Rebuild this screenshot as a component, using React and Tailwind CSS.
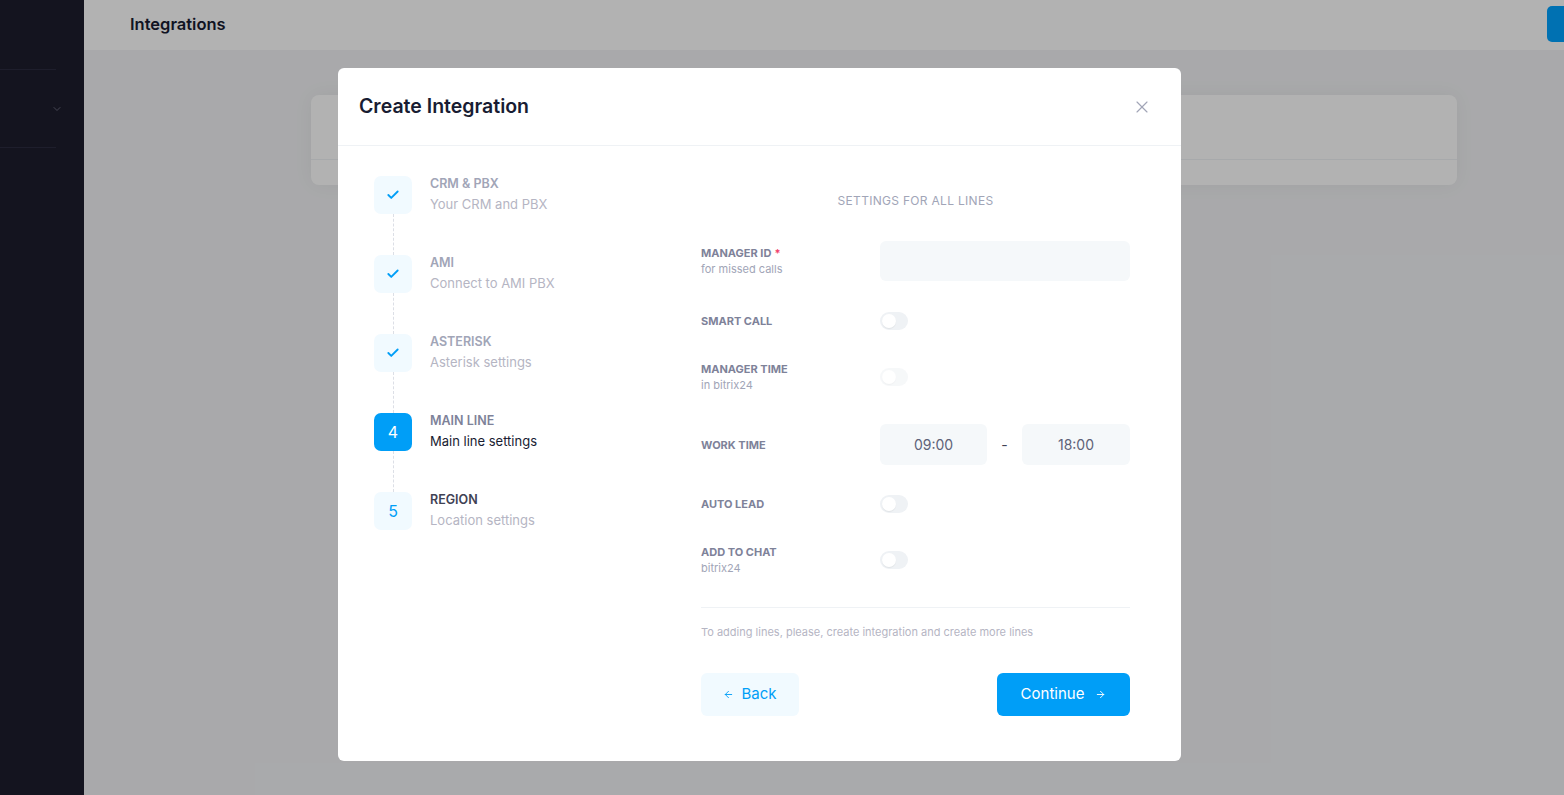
import { Check, X, ArrowLeft, ArrowRight, ChevronDown } from "lucide-react";

const steps = [
  { title: "CRM & PBX", desc: "Your CRM and PBX", state: "done" },
  { title: "AMI", desc: "Connect to AMI PBX", state: "done" },
  { title: "ASTERISK", desc: "Asterisk settings", state: "done" },
  { title: "MAIN LINE", desc: "Main line settings", state: "active", num: 4 },
  { title: "REGION", desc: "Location settings", state: "todo", num: 5 },
];

const Toggle = ({ disabled }) => (
  <div
    className={`w-[28px] h-[18px] rounded-full bg-[#eff2f5] flex items-center px-[2px] ${
      disabled ? "opacity-50" : ""
    }`}
  >
    <div className="w-[14px] h-[14px] rounded-full bg-white shadow-[0_1px_1px_rgba(0,0,0,0.06)]" />
  </div>
);

const Label = ({ title, sub, required }) => (
  <div className="w-[179px] shrink-0">
    <div className="text-[11px] leading-[14px] font-bold text-[#7e8299] uppercase">
      {title}
      {required && <span className="text-[#f1416c] ml-[3px]">*</span>}
    </div>
    {sub && <div className="text-[11px] leading-[14px] text-[#a1a5b7] mt-[2px]">{sub}</div>}
  </div>
);

const Step = ({ step, last }) => {
  const box =
    step.state === "active"
      ? "bg-[#009ef7] text-white"
      : "bg-[#f1faff] text-[#009ef7]";
  const titleColor =
    step.state === "done"
      ? "text-[#a1a5b7]"
      : step.state === "active"
      ? "text-[#7e8299]"
      : "text-[#3f4254]";
  const descColor = step.state === "active" ? "text-[#181c32]" : "text-[#b5b5c3]";
  return (
    <div className="flex flex-col">
      <div className="flex items-start">
        <div className={`w-[38px] h-[38px] rounded-[7px] flex items-center justify-center shrink-0 ${box}`}>
          {step.state === "done" ? (
            <Check size={14} strokeWidth={3.2} />
          ) : (
            <span className="text-[16px] leading-none">{step.num}</span>
          )}
        </div>
        <div className="ml-[18px]">
          <div className={`text-[12.5px] leading-[16px] font-semibold ${titleColor}`}>{step.title}</div>
          <div className={`text-[13px] leading-[16px] mt-[4px] ${descColor}`}>{step.desc}</div>
        </div>
      </div>
      {!last && (
        <div className="w-[38px] flex justify-center">
          <div className="h-[41px] border-l border-dashed border-[#dcdfe6]" />
        </div>
      )}
    </div>
  );
};

const App = () => {
  return (
    <div
      className="relative w-[1564px] h-[795px] overflow-hidden bg-[#f2f3f5]"
      style={{ fontFamily: "Inter, 'Noto Sans', sans-serif" }}
    >
      <div className="flex h-full">
        <div className="w-[84px] shrink-0 bg-[#1e1e2d] flex flex-col">
          <div className="h-[70px] border-b border-[#2b2b40] w-[56px]" />
          <div className="h-[78px] border-b border-[#2b2b40] w-[56px] relative">
            <ChevronDown size={12} className="absolute left-[51px] top-[33px] text-[#646477]" />
          </div>
        </div>
        <div className="flex-1 flex flex-col">
          <div className="h-[50px] bg-white flex items-center justify-between pl-[46px] shrink-0">
            <div className="text-[16.5px] font-semibold text-[#181c32] mt-[-2px]">Integrations</div>
            <div className="w-[17px] h-[36px] bg-[#00a3ff] rounded-l-[5px] mt-[-2px]" />
          </div>
          <div className="pl-[227px] pt-[45px]">
            <div className="w-[1146px] h-[90px] bg-white rounded-[8px] shadow-[0_0_20px_rgba(0,0,0,0.05)]">
              <div className="h-[65px] border-b border-[#eff2f5]" />
            </div>
          </div>
        </div>
      </div>

      <div className="absolute inset-0 bg-black/30 flex justify-start pt-[68px] pl-[338px]">
        <div className="w-[843px] h-[693px] bg-white rounded-[6px] flex flex-col">
          <div className="h-[78px] border-b border-[#eff2f5] flex items-center justify-between pl-[21px] pr-[29px] shrink-0">
            <div className="text-[19.5px] font-semibold text-[#181c32]">Create Integration</div>
            <X size={20} strokeWidth={1.4} className="text-[#a1a5b7]" />
          </div>
          <div className="flex pl-[36px] pt-[30px]">
            <div className="w-[327px] shrink-0">
              {steps.map((s, i) => (
                <Step key={s.title} step={s} last={i === steps.length - 1} />
              ))}
            </div>
            <div className="w-[429px] pt-[17px]">
              <div className="text-center text-[12px] leading-[16px] text-[#a1a5b7] tracking-[0.3px]">
                SETTINGS FOR ALL LINES
              </div>

              <div className="flex items-center mt-[32px] h-[40px]">
                <Label title="Manager ID" sub="for missed calls" required />
                <div className="flex-1 h-[40px] bg-[#f5f8fa] rounded-[6px]" />
              </div>

              <div className="flex items-center mt-[20px] h-[40px]">
                <Label title="Smart call" />
                <Toggle />
              </div>

              <div className="flex items-center mt-[16px] h-[40px]">
                <Label title="Manager time" sub="in bitrix24" />
                <Toggle disabled />
              </div>

              <div className="flex items-center mt-[27px] h-[41px]">
                <Label title="Work time" />
                <div className="w-[107px] h-[41px] bg-[#f5f8fa] rounded-[6px] flex items-center justify-center text-[14px] text-[#5e6278]">
                  09:00
                </div>
                <div className="w-[35px] text-center text-[14px] text-[#3f4254]">-</div>
                <div className="w-[108px] h-[41px] bg-[#f5f8fa] rounded-[6px] flex items-center justify-center text-[14px] text-[#5e6278]">
                  18:00
                </div>
              </div>

              <div className="flex items-center mt-[19px] h-[40px]">
                <Label title="Auto lead" />
                <Toggle />
              </div>

              <div className="flex items-center mt-[16px] h-[40px]">
                <Label title="Add to chat" sub="bitrix24" />
                <Toggle />
              </div>

              <div className="border-t border-[#eff2f5] mt-[27px]" />
              <div className="text-[11px] leading-[16px] text-[#b5b5c3] mt-[16px]">
                To adding lines, please, create integration and create more lines
              </div>

              <div className="flex justify-between mt-[33px]">
                <button className="w-[98px] h-[43px] rounded-[6px] bg-[#f1faff] text-[#009ef7] text-[15px] flex items-center justify-center gap-[7px]">
                  <ArrowLeft size={11} strokeWidth={2} />
                  Back
                </button>
                <button className="w-[133px] h-[43px] rounded-[6px] bg-[#009ef7] text-white text-[15px] flex items-center justify-center gap-[11px]">
                  Continue
                  <ArrowRight size={11} strokeWidth={2} />
                </button>
              </div>
            </div>
          </div>
        </div>
      </div>
    </div>
  );
};

export default App;
